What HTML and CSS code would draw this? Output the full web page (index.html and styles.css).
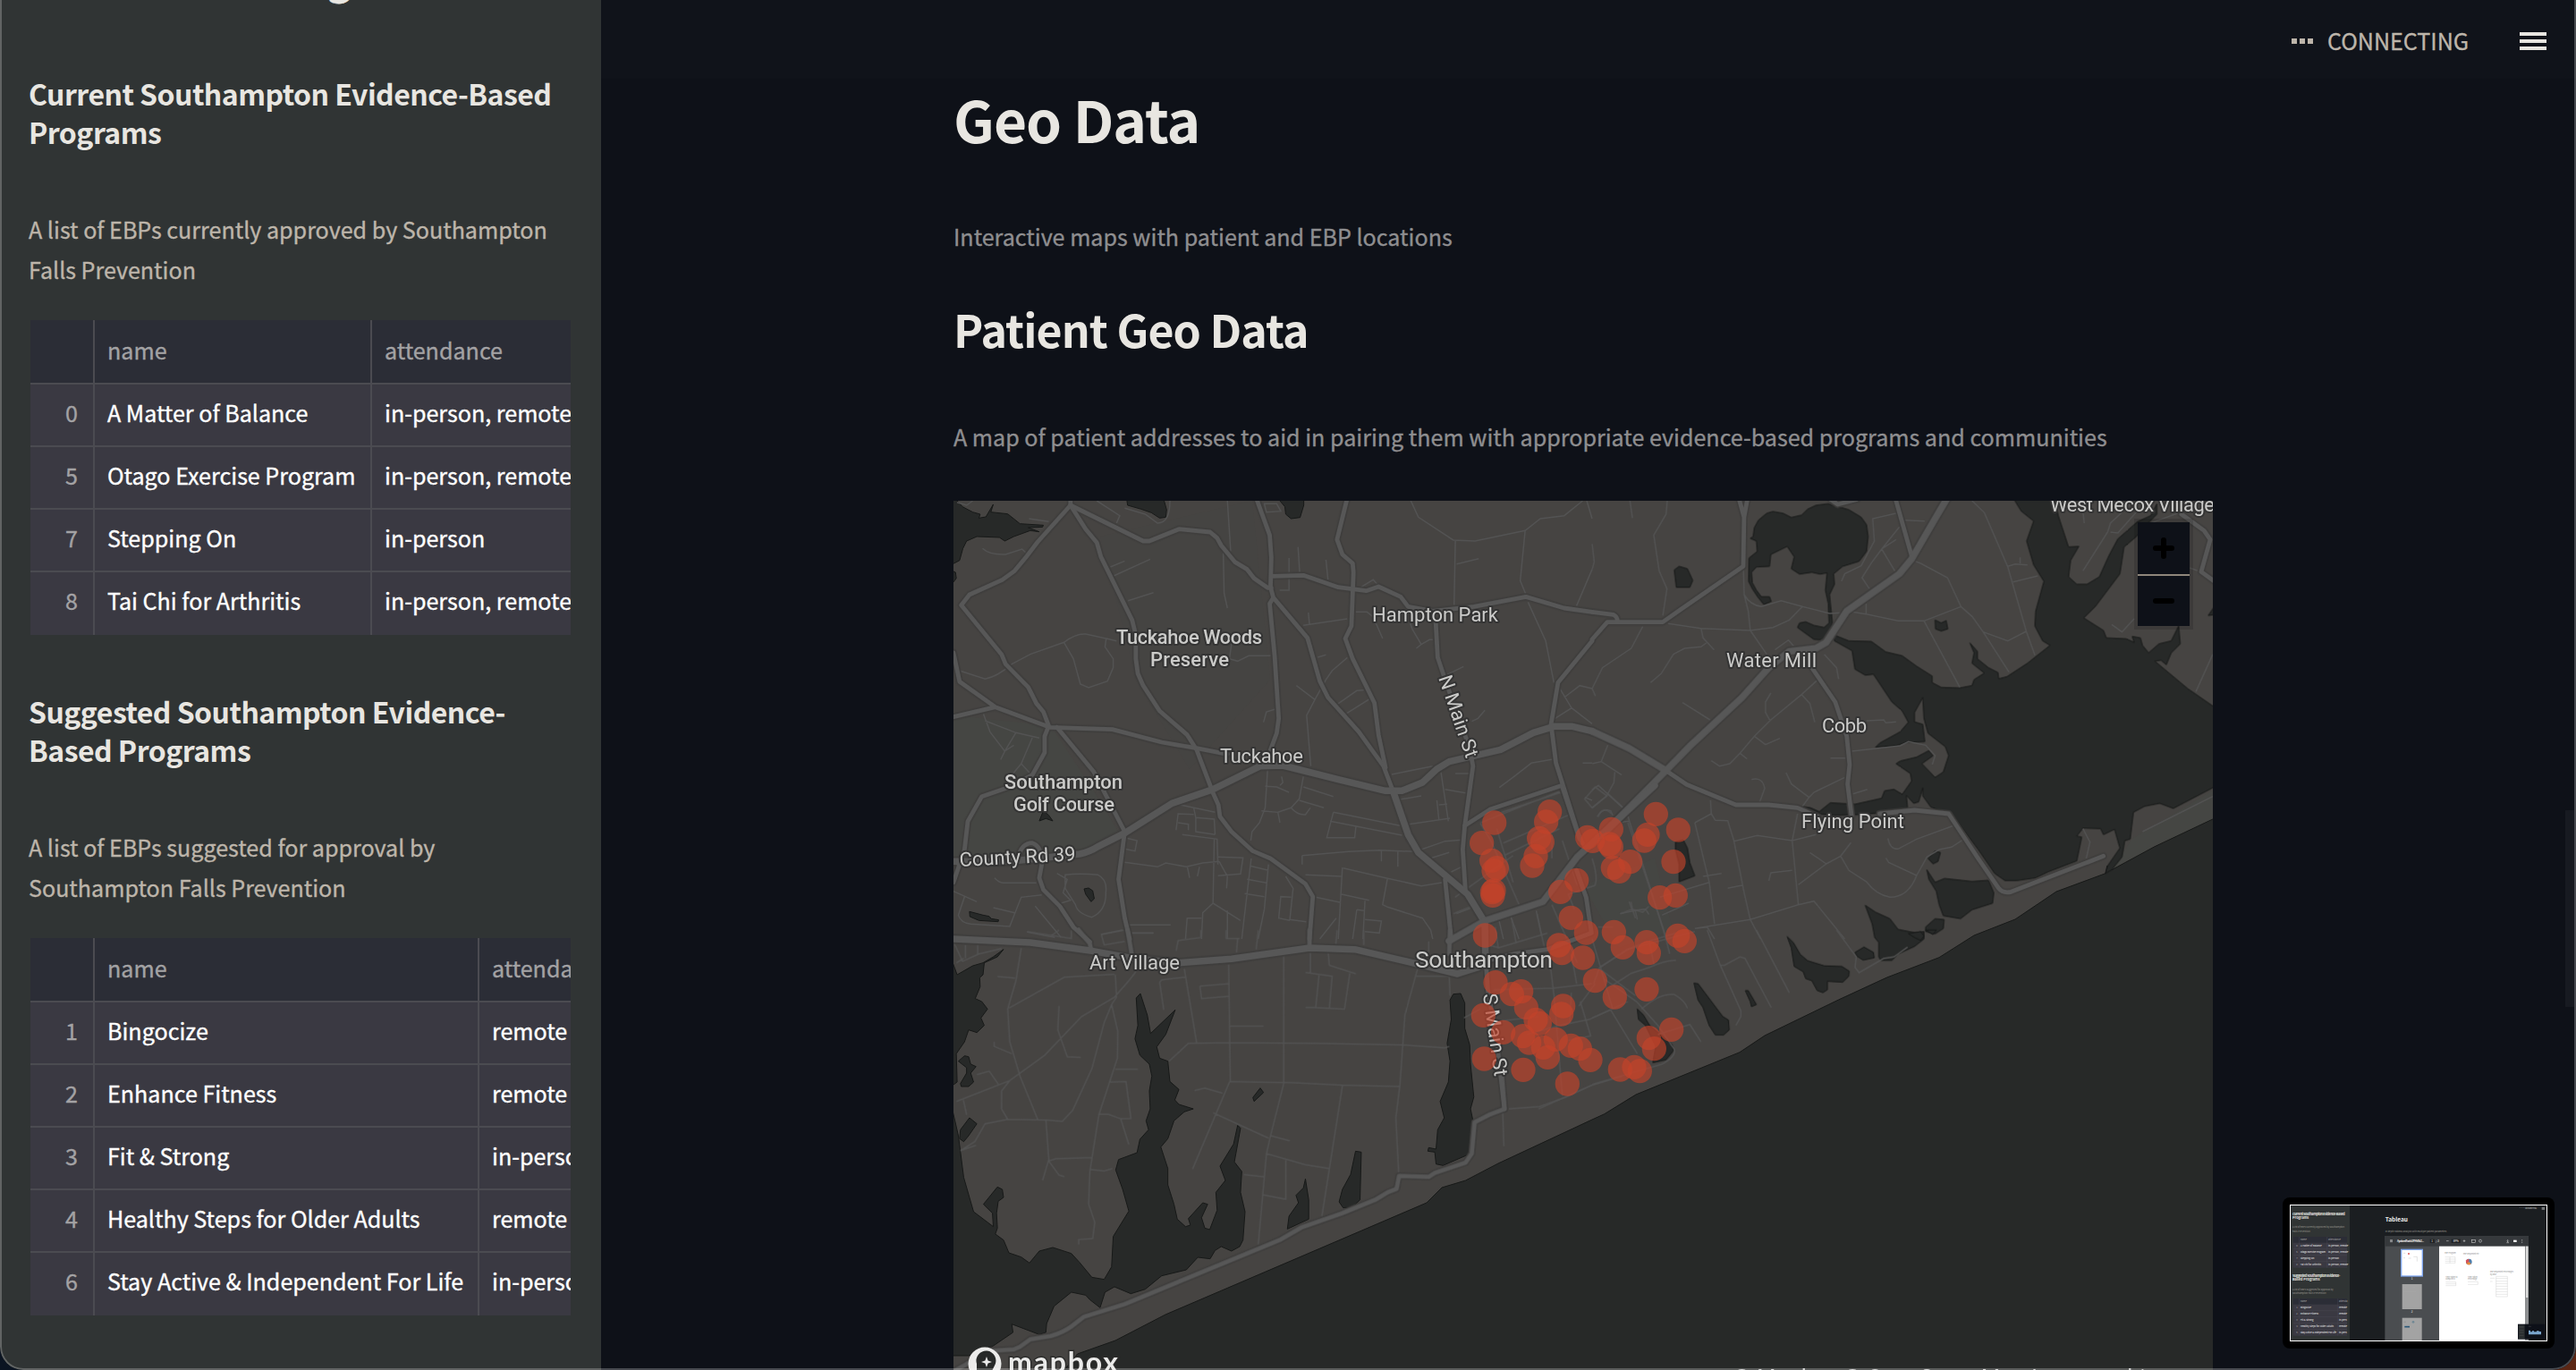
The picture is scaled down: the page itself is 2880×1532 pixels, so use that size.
FILE: index.html
```html
<!DOCTYPE html>
<html lang="en">
<head>
<meta charset="utf-8">
<title>Geo Data</title>
<link rel="stylesheet" href="styles.css">
</head>
<body>
<div class="window">
  <aside class="sidebar">
    <div class="sidebar-title">g</div>
    <section class="panel">
      <h3>Current Southampton Evidence-Based<br>Programs</h3>
      <p>A list of EBPs currently approved by Southampton<br>Falls Prevention</p>
      <div class="table table-current">
        <div class="row head"><span></span><span>name</span><span>attendance</span></div>
        <div class="row"><span>0</span><span>A Matter of Balance</span><span>in-person, remote</span></div>
        <div class="row"><span>5</span><span>Otago Exercise Program</span><span>in-person, remote</span></div>
        <div class="row"><span>7</span><span>Stepping On</span><span>in-person</span></div>
        <div class="row"><span>8</span><span>Tai Chi for Arthritis</span><span>in-person, remote</span></div>
      </div>
    </section>
    <section class="panel">
      <h3>Suggested Southampton Evidence-<br>Based Programs</h3>
      <p>A list of EBPs suggested for approval by<br>Southampton Falls Prevention</p>
      <div class="table table-suggested">
        <div class="row head"><span></span><span>name</span><span>attendance</span></div>
        <div class="row"><span>1</span><span>Bingocize</span><span>remote</span></div>
        <div class="row"><span>2</span><span>Enhance Fitness</span><span>remote</span></div>
        <div class="row"><span>3</span><span>Fit &amp; Strong</span><span>in-person</span></div>
        <div class="row"><span>4</span><span>Healthy Steps for Older Adults</span><span>remote</span></div>
        <div class="row"><span>6</span><span>Stay Active &amp; Independent For Life</span><span>in-person</span></div>
      </div>
    </section>
  </aside>

  <main class="main">
    <header class="topbar">
      <span class="dots"><i></i><i></i><i></i></span>
      <span class="status">CONNECTING</span>
      <span class="menu"><i></i><i></i><i></i></span>
    </header>
    <div class="content">
      <h1>Geo Data</h1>
      <p class="lead">Interactive maps with patient and EBP locations</p>
      <h2>Patient Geo Data</h2>
      <p class="lead">A map of patient addresses to aid in pairing them with appropriate evidence-based programs and communities</p>
      <div class="map">
        <svg class="map-canvas" viewBox="1066 560 1408 972" width="1408" height="972">
          <defs>
            <g id="trunk">
              <g transform="translate(1060 550) scale(.45918 .33333)">
                <path d="M13 1240L150 1240L320 1215Q345 1208 365 1190L430 1145L545 1045L645 998L760 920L815 918L950 965L1065 1003L1105 1003L1155 975L1190 930L1220 905L1345 865L1425 808L1475 787H1520L1568 803"/>
                <path d="M1085 1010L1120 1150L1145 1210L1265 1350L1305 1440"/>
              </g>
              <g transform="translate(1780 550) scale(.45918 .33333)">
                <path d="M0 803L90 860L180 935"/>
                <path d="M865 20L835 90L778 225L748 275L620 400L570 505L545 525L480 535L430 590L365 690L240 850L180 935L40 1130"/>
              </g>
              <g transform="translate(1060 1040) scale(.45918 .33333)">
                <path d="M13 30L200 42L350 70L450 95L560 110L690 97L880 60L990 65L1100 100L1240 147L1290 125"/>
              </g>
              <g transform="translate(1620 880) scale(.33333)">
                <path d="M690 -5L430 235L315 385L118 450L0 517M120 450L122 560"/>
              </g>
            </g>
            <g id="road">
              <g transform="translate(1060 550) scale(.45918 .33333)">
                <path d="M298 20V45L218 168L192 215L162 265L132 295L52 345L32 380L130 545L140 578L195 655L215 710L232 738L245 785L235 820V875L205 950L150 990L82 1022L48 1105L40 1200L13 1310"/>
                <path d="M298 45L335 125L362 170L372 218L448 430L457 480V560L462 610L475 650L515 735L582 815L605 865L645 1010L658 1050L662 1090L690 1140L742 1205L785 1230L870 1315L888 1358L880 1500"/>
                <path d="M298 45L475 165H490L562 125L638 135L655 155L665 180L698 235L728 260L745 290L778 322H787"/>
                <path d="M750 20L783 145L787 220L785 320L792 355L875 490L905 635L925 690L1000 805L1060 920L1085 1010M792 355L783 375L795 550L805 760L800 810L785 865"/>
                <path d="M972 20L947 160L960 210L985 240L987 270L982 450L967 492L985 560L1038 708L1048 815L1065 925"/>
                <path d="M787 283L865 280L950 320L1018 332L1048 318L1102 352L1120 385L1180 400L1280 385L1407 352L1500 390L1568 403"/>
                <path d="M13 540L28 637L115 722L205 768L248 790L400 797L520 840L605 860L680 880M13 755L115 722"/>
                <path d="M265 790L355 940L430 1140L415 1300L430 1430L442 1500"/>
                <path d="M170 1230Q178 1178 205 1178Q230 1190 228 1250L222 1295L232 1335L272 1390L305 1460L345 1510M13 1240L30 1250"/>
                <path d="M1187 430L1192 555L1215 650L1270 860L1278 920L1258 1120L1253 1200L1260 1345"/>
                <path d="M1568 500L1485 640L1468 780L1480 910L1535 1150L1545 1180M1495 985L1320 1065L1258 1120M1210 1300L1225 1500"/>
              </g>
              <g transform="translate(1780 550) scale(.45918 .33333)">
                <path d="M0 403L52 412Q62 418 62 437M358 25L370 85L378 25M370 85L368 250L215 395L172 437H37L0 495M738 20L778 215M580 25L598 42L645 25"/>
                <path d="M180 935L230 982L350 1050H430L500 1060L550 1090M700 1080L785 1068L868 1080L940 1230L990 1330Q1000 1348 1020 1342L1245 1222"/>
                <path d="M535 590L592 705L620 820L627 915L622 980L632 1090M1435 75L1490 130L1505 160L1483 268L1515 300"/>
              </g>
              <g transform="translate(1060 1040) scale(.45918 .33333)">
                <path d="M318 0L345 45L348 65M437 0L447 80M1222 0L1220 80M880 0V60"/>
                <path d="M1348 480L1355 600L1320 618L1282 645L1275 750L1260 780L1185 815L1170 828L1098 825L1092 868L1070 880L1040 905L960 950L860 998L810 1038L430 1255L330 1298L300 1330Q280 1350 250 1362L200 1373L175 1398L160 1407L100 1412L40 1460L13 1480"/>
              </g>
              <g transform="translate(1620 880) scale(.33333)">
                <path d="M380 0L438 175M428 280L460 370L478 490L330 545L220 560L100 590M122 560L130 680L160 850L186 1080"/>
              </g>
            </g>
          </defs>

          <rect x="1066" y="560" width="1408" height="972" class="land"/>
          <g class="park">
            <path d="M1066 800L1160 810L1175 812L1220 880L1250 930L1180 965L1066 960Z"/>
            <path d="M1770 990L1850 960L1870 1040L1810 1060Z"/>
            <path d="M2361 972L2384 938L2474 884V916L2409 946Z"/>
            <path d="M1230 600L1400 560L1420 760L1330 860L1270 760Z" opacity=".35"/>
          </g>

          <g class="water">
            <path d="M1190 1532L1204.6 1514L1247 1499L1303 1470L1595 1345L1612 1328L1638.6 1320L1675 1301L1780 1252L1793.8 1245.7L1829 1224L1945 1176.7L1973 1158L2055.5 1118L2109.7 1093L2168 1070.7L2207 1046L2253 1028L2299 997L2354 976.7L2356 968L2361 972.7L2409 946.7L2476 915V1534H1190Z"/>
            <g transform="translate(1060 550) scale(.45918 .33333)">
              <path d="M10 20L22 30L35 50L60 68L78 75L75 88L92 84L110 42L104 68L145 74L175 107L232 112L230 118L195 120L222 134L200 130L160 150L138 165L125 153L70 150L45 165L36 190L28 230L10 243Z"/>
              <path d="M435 25L437 45L470 58L495 70L515 88L530 85L532 60L525 25ZM805 25L820 50L822 75L835 90L857 86L866 45V25ZM232 1070L222 1104L238 1096L255 1104L245 1085ZM331 1332L335 1350L348 1375L356 1365L352 1338L342 1329ZM52 1408L53 1425L75 1438L122 1442L123 1436L105 1432L100 1424L85 1420ZM10 265L18 270L20 290L10 308Z"/>
            </g>
            <g transform="translate(1780 550) scale(.45918 .33333)">
              <path d="M575 40L545 45L525 58L510 78L485 86L465 72L440 66L425 72L405 95L395 120L392 150L385 156L400 165L402 200L382 222L381 300L390 325L403 352L418 378L436 368L432 352L412 352L400 330L390 305L388 270L400 252L432 250L435 210L450 200L475 183L492 218L485 258L505 276L535 270L555 276L572 272L568 330L575 375L577 440L565 455L540 448L520 436L505 440L500 455L540 495L560 497L580 470L585 440L578 345L590 310L588 275L610 250L650 233L668 200L672 150L668 110L655 85L625 60L600 50Z"/>
              <path d="M585 478L625 500L680 502L715 537L755 550L790 585L828 618V640L850 656L895 658L925 650L930 630L955 608L925 575L930 540L920 507L938 535V560L965 590L988 606L990 627L1010 620L1060 575L1115 515L1097 500L1078 450L1080 400L1100 300L1075 245L1058 165L1075 98L1045 65L1025 20H1125L1135 80L1160 185L1185 183L1165 230L1160 285L1180 310H1205L1235 285L1258 215L1280 158L1328 100L1360 80L1375 40L1375 75L1350 110L1325 150L1295 185L1285 275L1225 385L1197 423L1245 465L1252 490L1300 493L1320 505L1315 485L1335 490L1340 515L1355 540L1380 510L1410 500L1428 450L1432 510L1410 540L1398 580L1385 565L1370 568L1450 660L1515 722V990L1415 1062L1382 1045L1345 1055L1318 1075L1310 1165L1297 1170L1290 1225L1265 1268L1250 1280L1255 1255L1285 1195L1272 1132L1245 1150L1238 1130L1195 1128L1180 1155L1192 1158L1180 1238L1110 1275L1080 1295L1035 1304H1005L980 1280L940 1200L880 1090L865 1078L825 1058L805 1020V993L795 1040L783 1045L765 1018L768 1060L720 1075L650 1083L590 1085L545 1080L512 1056L532 1060L553 1073L580 1043L640 1048L705 1028L712 1003L735 998L755 1015L778 970L775 945L740 912L750 903L790 890L820 868L830 885L803 912L835 958L855 940L868 885L860 855L818 810L808 760L805 690L785 740V772L805 780L810 838L765 840L740 852L690 857L700 843L750 805L770 773L755 735L730 705L685 612L665 615L640 595L633 533L590 500Z"/>
              <path d="M200 262L212 250L232 258L245 297L238 320H205ZM835 430L850 440L862 432L866 460L850 467L836 460ZM203 1175L222 1168L232 1195L238 1245L250 1288L212 1308V1250L203 1200ZM818 1230L835 1205L848 1210L842 1240L830 1248ZM815 1268L835 1310L858 1297L925 1307L965 1303L978 1345L975 1380L925 1402L897 1432L855 1422L845 1385L838 1340L820 1300ZM665 1387L690 1410L725 1432L745 1468L790 1480L808 1475V1500L785 1525L745 1550L730 1572H703L698 1560V1512L688 1495L682 1450ZM812 1460L835 1432L857 1435L855 1465L835 1483L812 1475ZM1515 385L1500 415L1515 412Z"/>
            </g>
            <g transform="translate(1780 1040) scale(.45918 .33333)">
              <path d="M770 12L800 5L808 20L800 35L785 25ZM812 0H838L830 15ZM640 75L662 57L685 75L687 93L660 101L645 88ZM475 22L490 42L507 82L525 103L565 120L608 122L626 138L625 155L610 175L573 172V200L562 210L548 203L535 170L520 163L514 140L492 122L485 60ZM248 178L258 180L318 290L332 302L334 335L320 352H300L285 320L270 260L258 235ZM373 203H380L395 238L400 250L388 257L385 240ZM110 265L125 285L140 320L195 385L198 405L180 435L148 445L155 390L130 320L113 300Z"/>
            </g>
            <g transform="translate(1060 1040) scale(.45918 .33333)">
              <path d="M135 65L120 90L88 110L85 150L77 160L78 190L66 230L82 240L96 265L80 295L88 320L70 344L50 335L40 375L20 415L22 510L10 522V105L22 150L60 120L85 110L110 90ZM25 440L40 422L50 425L55 450L68 458L55 480L62 510L50 525H32L30 515L45 480L45 462ZM52 630L70 650L50 690L38 710L28 700L30 670Z"/>
              <path d="M10 600L25 690L38 830L62 945L110 995L108 950L86 920L120 862L132 870L135 897L122 910L118 950L120 1000L115 1020L135 1040L148 1083L178 1097L198 1117L222 1077L255 1065L300 1085L320 1115L350 1165L380 1172L398 1130L402 1028L440 943L425 870L408 805L415 770L460 747L467 702L488 670L482 640L492 600L490 540L496 490L490 450L467 420L455 365L462 320L458 228L468 213L485 285L493 347L553 268L530 350L508 392L515 430L535 440L540 508L562 535L552 570L562 585L597 600L575 610L550 640L535 700L518 728L535 800V855L550 920L558 970L578 995L590 990L585 968L620 915L632 920L617 965L625 1000L637 1005L655 940L652 880L675 840L662 792L695 718L705 655L712 665L697 778L715 810L712 880L723 945L718 1040L710 1062L690 1077L665 1062L650 1075L638 1103L608 1098L580 1140L520 1160L480 1205L445 1220L405 1197L382 1215L370 1267L345 1240L335 1225L300 1215L258 1262L240 1320L238 1350L222 1357L155 1322L158 1350L110 1395L50 1428H10Z"/>
              <path d="M760 530L768 545L745 575L742 562ZM992 742L1006 745L1003 905L985 930L962 932L952 912L960 870L980 820ZM870 835L878 905V970L826 1003L830 960L853 915L847 890L865 865ZM1230 215L1248 213L1258 245V330L1270 385L1272 450L1280 560L1272 600L1278 640L1272 750L1205 790L1188 785L1185 745L1168 742L1170 730L1188 735L1192 670L1208 630L1198 575L1218 510L1222 440L1215 380L1225 300L1222 235Z"/>
            </g>
          </g>

          <g class="street">
            <g transform="translate(1060 550) scale(.45918 .33333)">
              <path d="M22 35L45 45L60 30M362 30L418 80L410 105M430 55L480 75L510 105Q540 105 540 30M680 30L688 200M670 205L672 340L680 390M770 40H800L810 65L775 68ZM84 190Q100 212 140 210L180 192L190 205M197 90L245 100M395 252L430 232M403 282L492 226M438 365L500 338M852 185L856 270M830 222V330H807M920 228L925 295M28 600L90 628Q120 620 155 578L200 545L282 505Q310 475 335 477L385 492L382 520L402 560V590L388 635L342 657L322 645L305 560L282 505M385 492L410 500M690 510L685 560L705 568L732 550H785M865 448L972 426M877 405L880 445M900 555L920 547M992 403H1020L1035 420L1058 492M1005 320L1035 295L1045 310M1125 25L1145 85L1230 162L1283 165L1405 130L1442 90L1500 80L1545 30M1235 165L1232 380M1238 242L1292 224M1405 130L1393 298L1407 345M1412 370L1455 500L1475 640M1568 260L1530 383M1125 440L1130 460L1152 512L1140 525M1152 512L1172 496H1180M1205 620L1255 586M1555 30L1568 90"/>
              <path d="M86 745L102 805L138 870L128 898M90 768L165 808L222 826M165 808L138 870L160 850M205 825L178 912L200 945M178 912L155 950M848 650L893 697L920 630L935 600L972 556M893 697L873 750L883 920M945 715L995 667L1012 665M968 745L1025 696M795 730L775 738L768 773M1080 948L1180 920M1100 1032L1152 1020M1275 770L1290 760L1307 733M1200 940L1218 1105M1210 998L1260 1010M1235 945H1268M1190 1035L1195 1100M1195 1050L1215 1048M1470 898L1420 910L1378 955L1342 992M1500 690L1538 650L1568 660M1485 650L1518 725L1478 760M1518 725L1568 778M1545 910H1568M1550 1025L1568 1035M565 1050L650 1075M555 1135L560 1080L598 1082M598 1060L603 1093L648 1098L650 1150M560 1110L585 1115V1135M570 1150L655 1165L657 1250M603 1093V1140L650 1150M778 930L772 1060L758 1110L740 1140L737 1170M772 988L800 990L830 1008M812 955L815 975L808 985M763 1070L803 1075L808 1110M803 1075L835 1060L855 1030L865 955M865 990L938 1022M855 1035L915 1060M835 1060Q850 1085 870 1083L882 1060M938 1075L1100 1120M930 1105L1105 1152M1100 1120L1222 1095M938 1075L922 1160L990 1160L993 1122M862 1220L975 1207L1050 1202L1138 1207L1210 1172L1250 1168M862 1220V1250M1055 1205V1240M1095 1207V1258M1178 1228L1220 1210M870 1285L958 1290M962 1262L1065 1295L1152 1322L1205 1310M1070 1295L1058 1385L1070 1393L1155 1430L1175 1470L1180 1500M1225 1275L1250 1258"/>
              <path d="M430 1243L470 1250L510 1258L530 1245L580 1258L620 1245L660 1240M582 1255L588 1295M655 1225L718 1228L712 1282L657 1288M612 1258L607 1290M648 1165L645 1380L620 1412L617 1500M645 1380L712 1438M660 1240L680 1290L678 1330M735 1255L780 1270M728 1300L775 1312M722 1348L770 1358M738 1230L720 1440L715 1500M780 1250L770 1400L755 1500M822 1290L840 1330L832 1435L872 1442M835 1360L810 1358L805 1430L832 1438M890 1358L956 1378M960 1260L950 1500M958 1350L1025 1370M1015 1372L1010 1500M945 1430L905 1500M578 1500L582 1430H617M680 1405V1500M995 1402L1012 1405M995 1402L985 1500M1015 1435L1055 1440L1050 1480L1015 1475M113 1295Q125 1312 135 1312H215M13 1340L70 1375M40 1358L25 1420Q30 1445 55 1450L150 1458L178 1360L228 1352M110 1395L162 1412M212 1390L275 1495M265 1280L290 1300L280 1345L298 1370L275 1380M285 1285Q320 1278 365 1285Q388 1300 384 1345Q385 1405 350 1427Q315 1415 310 1385L285 1330ZM192 1477L260 1495M372 1485L425 1470M440 1453H542M445 1480H500M430 1160L460 1170L455 1205L430 1198M1238 1415L1275 1395M1340 1430L1352 1500M1370 1425L1390 1500M1432 1405L1445 1490"/>
            </g>
            <g transform="translate(1780 550) scale(.45918 .33333)">
              <path d="M92 30L98 88M183 25L180 75L150 145L163 265L182 325L172 415M0 175L5 235L0 260M368 250L370 345L380 400L385 465M385 465L265 458L185 442M265 458L270 490L297 530M265 458M123 452L95 525L25 590L0 660L8 685M278 507L265 520L225 525L198 545L168 610L142 640M385 465L425 545M385 465L440 455L480 430L512 385L578 408L615 405M370 345Q385 380 412 385L460 365L512 385M667 375V410L745 433H808L898 385L865 288L800 240L785 232M630 402L667 410M808 433L895 655M898 385L925 418L952 470L1015 605M952 470L1012 500L1057 468M925 30L955 70L1012 252L1057 468L1078 548M1025 302L1085 282M1012 250L1030 242L1060 245M1042 220V240M740 72L683 90L687 165L655 248L615 275L607 300M748 118L705 192L680 238L657 288L675 325M705 192L738 268M740 160L705 192M762 95L810 98M445 530L478 497L492 520M565 545L595 590L600 628M548 632L510 680L435 765L395 820L360 877L335 912L310 920L290 902M510 680L530 710L542 773M435 675L422 705V740L432 765M395 820L422 848L457 827M360 877L377 896M220 707L287 765M545 725M668 768L710 765L715 775L740 772M632 870L750 852L770 838L812 850L835 885L828 915M580 893H618M472 942L485 980L528 1025L512 1055M388 965Q415 955 420 995L408 1040M528 1025L540 1008L615 958M635 1013L670 998M1192 30L1198 105M1320 30L1262 105L1255 135L1195 265M1262 135L1280 138L1330 60M1425 72L1380 95L1350 110M1320 425L1290 470L1265 445M1455 255L1475 265M1511 545L1470 670M1511 1022L1340 1140M1195 1130L1212 1175L1203 1230"/>
              <path d="M38 850L22 905L0 912M22 905L72 950M55 940L53 975L35 1020L0 1060M0 1000L15 985L75 1060M12 1090Q25 1060 45 1070L50 1085M250 1110L290 1080L288 1035M290 1080L300 1102L330 1103L345 1170L370 1345L385 1435L410 1500M250 1110L285 1310L298 1450M270 1290L315 1280M330 1330L365 1320M285 1310L165 1360M345 1172L402 1153L487 1170L545 1150M500 1080L487 1170L502 1385L385 1435L250 1465L280 1460L298 1500M502 1385L540 1373L615 1500M487 1270L435 1278L430 1305M530 1210L570 1248L502 1318M570 1248L605 1222L630 1177M605 1222L625 1270L668 1308Q690 1350 725 1360Q770 1360 790 1287L815 1225L845 1200L875 1192L905 1165M715 1228L722 1243L790 1287M720 1162Q725 1200 745 1198L790 1165L880 1120M68 1415L105 1405L110 1435M90 1375L98 1405L130 1400L138 1418M170 1420L235 1380M60 1110L90 1105M85 1080L180 1500"/>
            </g>
            <g transform="translate(1060 1040) scale(.45918 .33333)">
              <path d="M192 5L300 28V0M250 20L270 0M373 15L380 50L430 38M373 15L430 0M440 10H500M555 70L560 35L615 25V0M677 0V28H710M755 0L750 65M705 28L702 75M947 0L943 60M1012 0V50M1170 38V75M15 45L35 105L75 80L130 62M42 50V95M72 48V80M20 110L38 95M178 60L165 170L145 265L150 375L175 490L218 635M120 156L163 161M148 262L283 158L405 148M270 255L267 335L290 425L323 427M457 140L440 170L405 225L325 290L235 420L150 505L20 575M407 150L410 225L398 250L413 340L412 430L367 620L345 810L342 920L357 980L352 1035L318 1038V1055M398 250L380 310L350 465L303 605L278 642L240 637L145 635L90 650L65 710L30 740L68 722M150 505L130 540V600L145 635M112 375V390L155 415M70 485L100 473L122 517M37 570L45 620M407 467H462M395 510L433 508L445 632L420 633L390 618H367M420 633L440 720M238 637L245 770L230 840M350 763L262 767L245 775L270 822L283 827M345 803L380 808L400 800M577 158L520 167L515 175L525 268M575 130L605 378M683 115L687 510M817 80V515M613 188L685 180M613 188L617 230L685 222M882 70V145M925 70L928 118L993 147M870 142L935 155L928 265M903 150L895 260L965 265L978 145M870 260H895M687 322H768M538 440L585 380L685 378L900 380L1107 385L1210 395L1220 390M1143 130L1112 285L1100 520L1090 630L1097 815M1140 155H1220L1222 220M685 508L840 512L960 520L1100 525M685 510L595 802M600 538L625 530L668 547M645 613L780 698M817 515L785 690L775 750L755 1055M785 690L832 707M775 750L870 787L928 800M960 522L910 960M822 772V903L765 888M720 820L770 828M1365 600L1440 592L1505 560L1568 520M1350 600L1353 725"/>
            </g>
            <g transform="translate(1780 1040) scale(.45918 .33333)">
              <path d="M280 0L312 118L362 270V290L350 320M312 118H322L360 90L372 95L436 260M400 0L480 210M595 0L643 90L640 125L650 143L710 95L735 90L768 57M0 518L170 450Q205 425 200 400L160 320L108 240L30 165M0 295L45 268M20 125L85 65L250 5M50 185L95 145L140 125Q180 100 204 102M120 265Q165 210 200 216Q225 235 232 262M160 350L238 317L265 375M45 268L110 415M0 30L50 265M140 40L150 115"/>
            </g>
            <g transform="translate(1620 880) scale(.33333)">
              <path d="M175 85L385 15M105 120L370 15M182 188L410 90M185 230L370 140M105 122L140 180L235 395M160 140L215 320M15 425L100 390M20 370L215 230M380 180L430 330M155 470L165 540L230 520L330 490M210 440L225 525M295 425L320 540M130 530L170 540M345 395L430 590M410 560L428 660M340 600L352 700L380 1035M150 680L350 675L480 660M50 775L105 745M130 790L300 770M260 830L370 800L470 780L600 720M440 720L475 835L400 850M485 660L505 605L600 545L660 520L760 490M505 610L625 700M480 240Q500 300 490 330L400 360L420 410M500 470L550 470M490 660L435 735M575 425L615 410L625 440M610 385L615 410L650 420L670 400M455 40L490 0L530 30L480 70ZM500 100Q515 60 545 90M600 120L720 480L740 560M530 20L590 75M300 1080L480 1000L580 970M345 160V240M410 690L405 790"/>
            </g>
          </g>

          <use href="#road" class="road-case"/><use href="#trunk" class="trunk-case"/>
          <use href="#road" class="road-fill"/><use href="#trunk" class="trunk-fill"/>

          <g class="labels">
            <text class="area" x="1248" y="720" textLength="163">Tuckahoe Woods</text>
            <text class="area" x="1286" y="745" textLength="88">Preserve</text>
            <text x="1534" y="695" textLength="141">Hampton Park</text>
            <text x="1364" y="853" textLength="93">Tuckahoe</text>
            <text class="area" x="1123" y="882" textLength="132">Southampton</text>
            <text class="area" x="1133" y="907" textLength="113">Golf Course</text>
            <text x="1073" y="969" textLength="130" transform="rotate(-3 1073 969)">County Rd 39</text>
            <text x="1608" y="758" textLength="96" transform="rotate(71 1608 758)">N Main St</text>
            <text x="1930" y="746" textLength="101">Water Mill</text>
            <text x="2037" y="819" textLength="50">Cobb</text>
            <text x="2014" y="926" textLength="115">Flying Point</text>
            <text x="2292" y="572" textLength="184">West Mecox Village</text>
            <text x="1218" y="1084" textLength="101">Art Village</text>
            <text class="town" x="1582" y="1081.500" textLength="154">Southampton</text>
            <text x="1658" y="1112" textLength="93" transform="rotate(82 1658 1112)">S Main St</text>
          </g>

          <g class="patients" transform="translate(1620 880) scale(.33333)">
            <circle cx="152" cy="120" r="41"/><circle cx="110" cy="188" r="41"/><circle cx="143" cy="247" r="41"/><circle cx="160" cy="272" r="41"/><circle cx="150" cy="281" r="41"/><circle cx="150" cy="348" r="41"/><circle cx="145" cy="353" r="41"/><circle cx="147" cy="364" r="41"/>
            <circle cx="338" cy="83" r="41"/><circle cx="326" cy="117" r="41"/><circle cx="302" cy="172" r="41"/><circle cx="313" cy="185" r="41"/><circle cx="291" cy="232" r="41"/><circle cx="279" cy="264" r="41"/>
            <circle cx="464" cy="169" r="41"/><circle cx="482" cy="181" r="41"/><circle cx="544" cy="142" r="41"/><circle cx="538" cy="192" r="41"/><circle cx="544" cy="201" r="41"/><circle cx="608" cy="251" r="41"/><circle cx="550" cy="271" r="41"/><circle cx="571" cy="283" r="41"/>
            <circle cx="694" cy="91" r="41"/><circle cx="769" cy="144" r="41"/><circle cx="666" cy="160" r="41"/><circle cx="655" cy="180" r="41"/><circle cx="753" cy="251" r="41"/><circle cx="760" cy="364" r="41"/><circle cx="707" cy="371" r="41"/>
            <circle cx="428" cy="313" r="41"/><circle cx="374" cy="352" r="41"/><circle cx="409" cy="439" r="41"/><circle cx="460" cy="489" r="41"/><circle cx="368" cy="531" r="41"/><circle cx="379" cy="557" r="41"/><circle cx="449" cy="573" r="41"/><circle cx="121" cy="498" r="41"/>
            <circle cx="553" cy="487" r="41"/><circle cx="583" cy="538" r="41"/><circle cx="663" cy="521" r="41"/><circle cx="670" cy="557" r="41"/><circle cx="767" cy="499" r="41"/><circle cx="790" cy="517" r="41"/>
            <circle cx="490" cy="650" r="41"/><circle cx="556" cy="705" r="41"/><circle cx="663" cy="679" r="41"/><circle cx="746" cy="814" r="41"/><circle cx="670" cy="842" r="41"/><circle cx="688" cy="878" r="41"/>
            <circle cx="156" cy="656" r="41"/><circle cx="211" cy="695" r="41"/><circle cx="242" cy="686" r="41"/><circle cx="259" cy="740" r="41"/><circle cx="115" cy="766" r="41"/><circle cx="383" cy="735" r="41"/><circle cx="377" cy="762" r="41"/><circle cx="291" cy="781" r="41"/><circle cx="304" cy="793" r="41"/>
            <circle cx="182" cy="823" r="41"/><circle cx="248" cy="836" r="41"/><circle cx="269" cy="858" r="41"/><circle cx="358" cy="847" r="41"/><circle cx="316" cy="874" r="41"/><circle cx="331" cy="907" r="41"/><circle cx="409" cy="868" r="41"/><circle cx="439" cy="878" r="41"/><circle cx="474" cy="916" r="41"/>
            <circle cx="118" cy="912" r="41"/><circle cx="249" cy="949" r="41"/><circle cx="397" cy="996" r="41"/><circle cx="574" cy="948" r="41"/><circle cx="621" cy="940" r="41"/><circle cx="640" cy="953" r="41"/>
          </g>

          <g class="mapbox">
            <circle cx="1101" cy="1525" r="18.500"/>
            <path class="mapbox-hole" d="M1092 1535V1525A11 11 0 1 1 1112 1527L1108 1535Z"/>
            <path d="M1103 1517L1104.600 1521.500L1109 1523L1104.600 1524.500L1103 1529L1101.400 1524.500L1097 1523L1101.400 1521.500Z"/>
            <text x="1127" y="1535" textLength="123">mapbox</text>
          </g>
          <text class="credit" x="1938" y="1548" textLength="530">© Mapbox © OpenStreetMap Improve this map</text>
        </svg>
        <div class="zoom">
          <svg width="58" height="58" viewBox="0 0 58 58"><path d="M29 20V38M20 29H38"/></svg>
          <svg width="58" height="56" viewBox="0 0 58 56"><path d="M20 28H38"/></svg>
        </div>
      </div>
    </div>
  </main>

  <div class="scroll-thumb"></div>

  <div class="preview">
    <svg width="288" height="153" viewBox="60 81 864 459">
      <rect x="60" y="81" width="864" height="459" fill="#1b1e21"/>
      <rect x="60" y="81" width="201" height="459" fill="#303434"/>
      <g fill="#e6e6e0" font-weight="700" font-size="11.500"><text x="69" y="116" textLength="176">Current Southampton Evidence-Based</text><text x="69" y="129">Programs</text><text x="69" y="323" textLength="160">Suggested Southampton Evidence-</text><text x="69" y="336">Based Programs</text></g>
      <g fill="#98958f" font-size="8"><text x="69" y="160" textLength="174">A list of EBPs currently approved by Southampton</text><text x="69" y="174">Falls Prevention</text><text x="69" y="368" textLength="137">A list of EBPs suggested for approval by</text><text x="69" y="381">Southampton Falls Prevention</text><text x="380" y="173" textLength="206">In depth Tableau analysis with multiple patient parameters</text></g>
      <g fill="#3a3942"><rect x="71" y="189" width="181" height="104"/><rect x="71" y="396" width="181" height="125"/></g>
      <g fill="#2b2d36"><rect x="71" y="189" width="181" height="20"/><rect x="71" y="396" width="181" height="20"/></g>
      <path d="M71 230H252M71 251H252M71 272H252M92 189V293M185 189V293M71 437H252M71 458H252M71 479H252M71 500H252M92 396V521M221 396V521" stroke="#50505a" fill="none"/>
      <g fill="#aaa" font-size="8"><text x="96" y="202">name</text><text x="189" y="202">attendance</text><text x="96" y="409">name</text><text x="225" y="409">attenda</text><text x="82" y="223">0</text><text x="82" y="244">5</text><text x="82" y="265">7</text><text x="82" y="286">8</text><text x="82" y="430">1</text><text x="82" y="451">2</text><text x="82" y="472">3</text><text x="82" y="493">4</text><text x="82" y="514">6</text></g>
      <g fill="#f4f4f4" font-size="8"><text x="96" y="223">A Matter of Balance</text><text x="96" y="244" textLength="84">Otago Exercise Program</text><text x="96" y="265">Stepping On</text><text x="96" y="286">Tai Chi for Arthritis</text><text x="189" y="223">in-person, remote</text><text x="189" y="244">in-person, remote</text><text x="189" y="265">in-person</text><text x="189" y="286">in-person, remote</text><text x="96" y="430">Bingocize</text><text x="96" y="451">Enhance Fitness</text><text x="96" y="472">Fit &amp; Strong</text><text x="96" y="493">Healthy Steps for Older Adults</text><text x="96" y="514" textLength="120">Stay Active &amp; Independent For Life</text><text x="225" y="430">remote</text><text x="225" y="451">remote</text><text x="225" y="472">in-pers</text><text x="225" y="493">remote</text><text x="225" y="514">in-pers</text></g>
      <text x="380" y="139" fill="#eee" font-weight="700" font-size="19.500">Tableau</text>
      <text x="828" y="97" fill="#bbb" font-size="8" textLength="60">··· CONNECTING</text>
      <path d="M905 91H915M905 94H915M905 97H915" stroke="#ddd" stroke-width="1.500"/>
      <rect x="379" y="186" width="482" height="354" fill="#4a4d50"/>
      <rect x="379" y="186" width="482" height="35" fill="#36393c"/>
      <path d="M396 200H405M396 203H405M396 206H405M585 203H593M641 203H649M645 199V207" stroke="#e8e8e8" stroke-width="1.500"/>
      <text x="420" y="207" fill="#eee" font-size="9.500" font-weight="700" textLength="90">ApdamRodsUFMtBk2...</text>
      <rect x="530" y="197" width="15" height="13" fill="#1f2123"/><rect x="602" y="197" width="30" height="13" fill="#1f2123"/>
      <g fill="#eee" font-size="9"><text x="535" y="207">1</text><text x="550" y="207">/ 3</text><text x="608" y="207">69%</text><text x="467" y="332">1</text><text x="467" y="445">2</text></g>
      <g fill="none" stroke="#e8e8e8" stroke-width="1.500"><rect x="671" y="199" width="12" height="9"/><circle cx="699" cy="203" r="4.500"/><path d="M791 198V206M788 203L791 206L794 203M787 209H795"/></g>
      <rect x="810" y="200" width="11" height="7" fill="#fff"/><path d="M839 199V201M839 203V205M839 207V209" stroke="#fff" stroke-width="2"/>
      <rect x="434" y="232" width="71" height="89" fill="#fff" stroke="#7ea5ee" stroke-width="4"/>
      <rect x="437" y="348" width="66" height="84" fill="#a3a3a3"/><rect x="437" y="461" width="66" height="79" fill="#a3a3a3"/>
      <rect x="561" y="221" width="289" height="319" fill="#fff"/><rect x="850" y="221" width="11" height="319" fill="#8e9092"/><rect x="852" y="221" width="7" height="172" fill="#ddd"/>
      <circle cx="459" cy="246" r="3" fill="#d55"/><path d="M441 244H448M441 260H447M458 261H467M475 256H487V272M441 358H451M470 358H480M441 373H484" stroke="#aaa" fill="none"/>
      <path d="M445 491H462" stroke="#2b5878" stroke-width="5"/><circle cx="474" cy="475" r="4" fill="#6f8794"/><path d="M442 475H450" stroke="#777"/>
      <circle cx="661" cy="273" r="10" fill="#4d7fae"/><path d="M661 273V263A10 10 0 0 0 652 278Z" fill="#dc5055"/><path d="M661 273L652 278A10 10 0 0 0 668 280Z" fill="#e88a3c"/>
      <g fill="#888" font-size="6"><text x="580" y="246">EBP Program</text><text x="642" y="249">EBP Requested Pie</text><text x="583" y="326">Time Taken to</text><text x="583" y="332">complete a</text><text x="657" y="326">Time Taken</text><text x="657" y="332">Percentage</text><text x="732" y="310">EBP Requested Percentages</text><text x="732" y="317">by DBR</text></g>
      <path d="M581 257H615M581 264H615M581 271H615M581 277H615M597 257V277M615 257V277M583 341H617M583 347H617M583 353H617M617 341V353M657 340H691M657 349H691M691 340V349M752 322H790M752 329H790M752 338H790M752 346H790M752 355H790M752 364H790M752 373H790M752 382H790M752 390H790M752 322V390M790 322V390M732 328H748M732 339H740" stroke="#bbb" fill="none"/>
      <rect x="825" y="482" width="92" height="51" fill="#0d1018"/><rect x="827" y="485" width="21" height="46" fill="#2a2e30"/><path d="M861 517V503H867V508H873V505H879V508H888V505H896V507H903V517Z" fill="#7aa5cc"/><path d="M830 492H845M830 503H845M830 510H845M830 520H845M861 490H870" stroke="#666"/>
      <rect x="61.500" y="82.500" width="861" height="456" fill="none" stroke="#fff" stroke-width="3"/>
    </svg>
  </div>
</div>
</body>
</html>
```
FILE: styles.css
```css
* { box-sizing: border-box; }
body {
  margin: 0;
  width: 2880px;
  height: 1532px;
  overflow: hidden;
  background: linear-gradient(90deg, #0b1422 50%, #5c2614 50%);
  font-family: "Noto Sans CJK SC", "Noto Sans", sans-serif;
  font-size: 25.080px;
  line-height: 44.800px;
}
h1, h2, h3, p { margin: 0; }
h1, h2, h3 { color: #e8e6e1; font-weight: 700; white-space: nowrap; }
.window {
  position: relative;
  display: flex;
  width: 2880px;
  height: 1532px;
  overflow: hidden;
  border-radius: 0 0 26px 26px;
  background: #0e1118;
}
.window::after {
  content: "";
  position: absolute;
  inset: 0;
  border: 2px solid rgba(255, 255, 255, .24);
  border-top: 0;
  border-radius: 0 0 26px 26px;
  pointer-events: none;
}

/* Sidebar */
.sidebar {
  width: 672px;
  flex: none;
  padding-left: 32px;
  background: #303434;
  overflow: hidden;
  -webkit-text-stroke: .350px currentColor;
}
.sidebar-title {
  height: 83px;
  margin-top: -27px;
  padding-left: 334px;
  color: #e8e6e1;
  font-size: 44px;
  font-weight: 700;
  line-height: 2px;
}
.sidebar-title + .panel { margin-top: 27px; }
.panel { height: 691px; }
.panel h3 { font-size: 32px; line-height: 43px; letter-spacing: -.530px; -webkit-text-stroke: 0; }
.panel p { margin-top: 65px; color: #bdb5aa; white-space: nowrap; }
.table {
  width: 604px;
  margin: 34px 0 0 2px;
  overflow: hidden;
  background: #3a3942;
  color: #fff;
}
.row { display: grid; height: 70px; border-top: 2px solid #4b4b51; }
.row.head { border-top: 0; background: #2b2d36; color: #a3a2a4; }
.row:last-child { height: 72px; }
.table-current .row { grid-template-columns: 70px 310px 300px; }
.table-suggested .row { grid-template-columns: 70px 430px 300px; }
.row span { padding: 0 14px; border-left: 2px solid #4b4b51; line-height: 62px; white-space: nowrap; }
.row.head span { line-height: 66px; }
.row span:first-child { padding-right: 17px; border-left: 0; color: #a3a2a4; text-align: right; }

/* Main column */
.main { flex: 1; min-width: 0; }
.topbar {
  display: flex;
  align-items: center;
  justify-content: flex-end;
  height: 88px;
  padding: 0 33px 0 0;
  background: #10131a;
}
.dots { display: flex; gap: 3px; margin: 4px 16px 0 0; }
.dots i { width: 6px; height: 6px; background: #bdb5aa; }
.status { width: 158px; margin: 2px 57px 0 0; color: #bdb5aa; -webkit-text-stroke: .350px currentColor; }
.menu { display: flex; flex-direction: column; gap: 4.300px; margin-top: 4px; }
.menu i { width: 30px; height: 3.800px; background: #e8e6e1; }
.content { width: 1408px; margin-left: 394px; }
h1 { padding-top: 4px; font-size: 64px; line-height: 80px; letter-spacing: -1px; }
h2 { padding-top: 50px; font-size: 50px; line-height: 60px; letter-spacing: -.900px; }
.lead { color: #8e8e90; white-space: nowrap; -webkit-text-stroke: .350px currentColor; }
h1 + .lead { margin-top: 70px; }
h2 + .lead { margin-top: 69px; height: 72px; }
.map { position: relative; width: 1408px; height: 972px; margin-top: 22.200px; }
.map-canvas { display: block; }
.map-canvas path { vector-effect: non-scaling-stroke; }
.land { fill: #464442; }
.park { fill: #464844; opacity: .7; }
.water { fill: #272928; stroke: #171918; stroke-width: 1; }
.street { fill: none; stroke: #535353; stroke-width: 1.500; }
.road-case, .road-fill, .trunk-case, .trunk-fill { fill: none; stroke-linejoin: round; stroke-linecap: round; }
.road-case { stroke: #3f3e3d; stroke-width: 8; }
.trunk-case { stroke: #3f3e3d; stroke-width: 11; }
.road-fill { stroke: #575757; stroke-width: 4.800; }
.trunk-fill { stroke: #575757; stroke-width: 7.500; }
.labels text {
  fill: #cbcbc9;
  stroke: #343434;
  stroke-width: 4;
  stroke-linejoin: round;
  paint-order: stroke;
  font: 400 22px Roboto, sans-serif;
}
.labels .area { font-weight: 500; }
.labels .town { font-size: 26.500px; }
.patients { fill: #c2432b; fill-opacity: .66; }
.mapbox { fill: #ebebea; }
.mapbox-hole { fill: #272928; }
.mapbox text { font: 700 32px Lato, sans-serif; stroke: #2c2c2b; stroke-width: 3; paint-order: stroke; }
.credit { fill: #d0d0d0; font: 400 24px Roboto, sans-serif; }
.zoom {
  position: absolute;
  top: 24px;
  left: 1324px;
  display: flex;
  flex-direction: column;
  gap: 2px;
  background: #8f877b;
  box-shadow: 0 0 0 4px rgba(0, 0, 0, .12);
}
.zoom svg { display: block; background: #0e1118; }
.zoom path { fill: none; stroke: #000; stroke-width: 6; stroke-linecap: round; }

.scroll-thumb {
  position: absolute;
  right: 2px;
  top: 906px;
  width: 10px;
  height: 220px;
  background: #171a21;
}
.preview {
  position: absolute;
  left: 2552px;
  top: 1339px;
  width: 304px;
  height: 169px;
  padding: 8px;
  border-radius: 8px;
  background: #000;
}
.preview svg { display: block; }
```
